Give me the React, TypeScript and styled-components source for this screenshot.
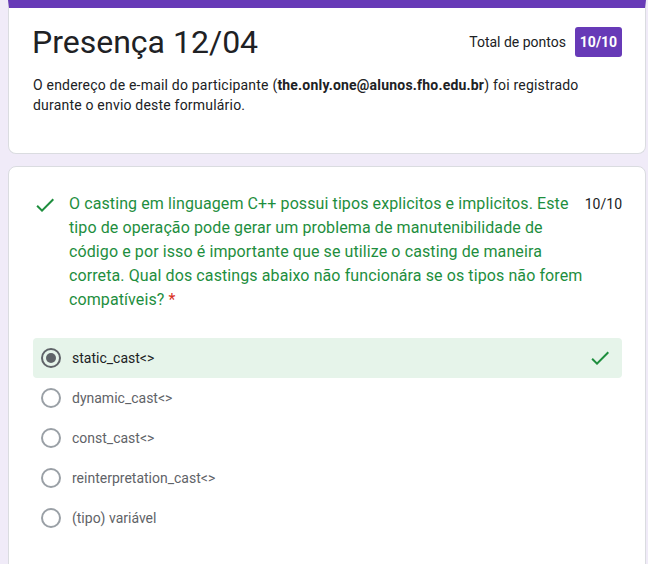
import styled, { createGlobalStyle } from 'styled-components'

const GlobalStyle = createGlobalStyle`
   html, body {
      margin: 0;
      padding: 0;
      background: #f0ebf8;
      font-family: Roboto, "Liberation Sans", Arial, sans-serif;
      color: #202124;
   }
`

const Page = styled.div`
   display: flex;
   flex-direction: column;
   gap: 12px;
   padding: 0 2px 0 8px;
   height: 564px;
   overflow: hidden;
`

const Card = styled.div<{ $header?: boolean }>`
   background: #fff;
   border: 1px solid #dadce0;
   border-top: ${(p) => (p.$header ? '8px solid #673ab7' : '1px solid #dadce0')};
   border-radius: ${(p) => (p.$header ? '0 0 8px 8px' : '8px')};
   padding: ${(p) => (p.$header ? '18px 23px 38px 23px' : '24px 23px 48px 24px')};
   box-sizing: border-box;
   flex-shrink: 0;
`

const HeaderRow = styled.div`
   display: flex;
   justify-content: space-between;
   align-items: flex-start;
`

const Title = styled.h1`
   margin: 0;
   font-size: 32px;
   font-weight: 400;
   line-height: 32px;
   color: #202124;
`

const Score = styled.div`
   display: flex;
   align-items: center;
   gap: 9px;
   margin-top: 1px;
   font-size: 14px;
   color: #202124;
`

const Badge = styled.span`
   display: inline-flex;
   align-items: center;
   justify-content: center;
   width: 47px;
   height: 30px;
   background: #673ab7;
   color: #fff;
   font-weight: 700;
   font-size: 14px;
   border-radius: 3px;
`

const Description = styled.p`
   margin: 17px 0 0 1px;
   font-size: 14px;
   line-height: 20px;
   letter-spacing: 0.2px;
   color: #202124;
`

const QuestionRow = styled.div`
   display: flex;
   align-items: flex-start;
   padding-top: 1px;
`

const CheckBox = styled.div`
   width: 36px;
   flex-shrink: 0;
   padding-top: 1px;
`

const QuestionText = styled.div`
   flex: 1;
   font-size: 16px;
   line-height: 24px;
   color: #1e8e3e;
   letter-spacing: 0.1px;
`

const Required = styled.span`
   color: #d93025;
`

const Points = styled.div`
   font-size: 14px;
   line-height: 24px;
   color: #202124;
`

const Options = styled.div`
   display: flex;
   flex-direction: column;
   margin-top: 26px;
`

const Option = styled.div<{ $correct?: boolean }>`
   display: flex;
   align-items: center;
   height: 40px;
   padding: 0 10px 0 8px;
   border-radius: 4px;
   background: ${(p) => (p.$correct ? '#e6f4ea' : 'transparent')};
`

const Radio = styled.span<{ $checked?: boolean }>`
   width: 20px;
   height: 20px;
   box-sizing: border-box;
   border-radius: 50%;
   border: 2px solid ${(p) => (p.$checked ? '#5f6368' : '#9aa0a6')};
   display: flex;
   align-items: center;
   justify-content: center;
   flex-shrink: 0;

   &::after {
      content: '';
      display: ${(p) => (p.$checked ? 'block' : 'none')};
      width: 10px;
      height: 10px;
      border-radius: 50%;
      background: #5f6368;
   }
`

const OptionLabel = styled.span<{ $checked?: boolean }>`
   flex: 1;
   margin-left: 11px;
   font-size: 14px;
   color: ${(p) => (p.$checked ? '#202124' : '#5f6368')};
`

const Tick = ({ size = 20 }: { size?: number }) => (
   <svg width={size} height={size} viewBox="0 0 24 24" fill="#1e8e3e">
      <path d="M9 16.17L4.83 12l-1.42 1.41L9 19 21 7l-1.41-1.41z" />
   </svg>
)

interface Opcao {
   texto: string
   marcada?: boolean
}

const opcoes: Opcao[] = [
   { texto: 'static_cast<>', marcada: true },
   { texto: 'dynamic_cast<>' },
   { texto: 'const_cast<>' },
   { texto: 'reinterpretation_cast<>' },
   { texto: '(tipo) variável' },
]

export default function App() {
   return (
      <>
         <GlobalStyle />
         <Page>
            <Card $header>
               <HeaderRow>
                  <Title>Presença 12/04</Title>
                  <Score>
                     Total de pontos
                     <Badge>10/10</Badge>
                  </Score>
               </HeaderRow>
               <Description>
                  O endereço de e-mail do participante (<b>the.only.one@alunos.fho.edu.br</b>) foi
                  registrado durante o envio deste formulário.
               </Description>
            </Card>

            <Card>
               <QuestionRow>
                  <CheckBox>
                     <Tick size={24} />
                  </CheckBox>
                  <QuestionText>
                     O casting em linguagem C++ possui tipos explicitos e implicitos. Este tipo de
                     operação pode gerar um problema de manutenibilidade de código e por isso é
                     importante que se utilize o casting de maneira correta. Qual dos castings
                     abaixo não funcionára se os tipos não forem compatíveis? <Required>*</Required>
                  </QuestionText>
                  <Points>10/10</Points>
               </QuestionRow>

               <Options>
                  {opcoes.map((opcao, index) => (
                     <Option key={index} $correct={opcao.marcada}>
                        <Radio $checked={opcao.marcada} />
                        <OptionLabel $checked={opcao.marcada}>{opcao.texto}</OptionLabel>
                        {opcao.marcada && <Tick size={24} />}
                     </Option>
                  ))}
               </Options>
            </Card>
         </Page>
      </>
   )
}
